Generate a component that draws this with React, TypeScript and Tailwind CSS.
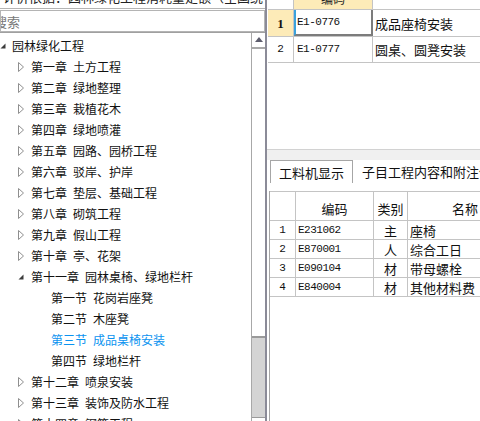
import React from 'react';

type TreeNode = {
  ch: string;
  title: string;
  level: 0 | 1 | 2;
  icon?: 'open' | 'closed';
  active?: boolean;
};

const tree: TreeNode[] = [
  { ch: '园林绿化工程', title: '', level: 0, icon: 'open' },
  { ch: '第一章', title: '土方工程', level: 1, icon: 'closed' },
  { ch: '第二章', title: '绿地整理', level: 1, icon: 'closed' },
  { ch: '第三章', title: '栽植花木', level: 1, icon: 'closed' },
  { ch: '第四章', title: '绿地喷灌', level: 1, icon: 'closed' },
  { ch: '第五章', title: '园路、园桥工程', level: 1, icon: 'closed' },
  { ch: '第六章', title: '驳岸、护岸', level: 1, icon: 'closed' },
  { ch: '第七章', title: '垫层、基础工程', level: 1, icon: 'closed' },
  { ch: '第八章', title: '砌筑工程', level: 1, icon: 'closed' },
  { ch: '第九章', title: '假山工程', level: 1, icon: 'closed' },
  { ch: '第十章', title: '亭、花架', level: 1, icon: 'closed' },
  { ch: '第十一章', title: '园林桌椅、绿地栏杆', level: 1, icon: 'open' },
  { ch: '第一节', title: '花岗岩座凳', level: 2 },
  { ch: '第二节', title: '木座凳', level: 2 },
  { ch: '第三节', title: '成品桌椅安装', level: 2, active: true },
  { ch: '第四节', title: '绿地栏杆', level: 2 },
  { ch: '第十二章', title: '喷泉安装', level: 1, icon: 'closed' },
  { ch: '第十三章', title: '装饰及防水工程', level: 1, icon: 'closed' },
  { ch: '第十四章', title: '钢筋工程', level: 1, icon: 'closed' },
];

const materials = [
  { no: '1', code: 'E231062', kind: '主', name: '座椅' },
  { no: '2', code: 'E870001', kind: '人', name: '综合工日' },
  { no: '3', code: 'E090104', kind: '材', name: '带母螺栓' },
  { no: '4', code: 'E840004', kind: '材', name: '其他材料费' },
];

function Arrow({ open }: { open?: boolean }) {
  if (open) {
    return (
      <svg width="6" height="6" viewBox="0 0 6 6">
        <polygon points="5.5,0.5 5.5,5.5 0.5,5.5" fill="#3c3c3c" />
      </svg>
    );
  }
  return (
    <svg width="6" height="10" viewBox="0 0 6 10">
      <polygon points="0.5,0.5 5.5,5 0.5,9.5" fill="#fff" stroke="#8f8f8f" strokeWidth="1" />
    </svg>
  );
}

function TreeRow({ node }: { node: TreeNode }) {
  const color = node.active ? 'text-[#0b93f0]' : 'text-[#111]';
  if (node.level === 0) {
    return (
      <div className="flex h-[21px] items-center">
        <span className="flex w-[12px] items-center pt-[1px]">
          <Arrow open />
        </span>
        <span className={color}>{node.ch}</span>
      </div>
    );
  }
  if (node.level === 1) {
    return (
      <div className="flex h-[21px] items-center pl-[18px]">
        <span className="flex w-[13px] items-center">
          <Arrow open={node.icon === 'open'} />
        </span>
        <span className={color}>{node.ch}</span>
        <span className={`ml-[6px] ${color}`}>{node.title}</span>
      </div>
    );
  }
  return (
    <div className="flex h-[21px] items-center pl-[51px]">
      <span className={color}>{node.ch}</span>
      <span className={`ml-[6px] ${color}`}>{node.title}</span>
    </div>
  );
}

export default function App() {
  return (
    <div className="flex h-[421px] w-[480px] overflow-hidden bg-white font-['Noto_Sans_CJK_SC',sans-serif] text-[12px] leading-none">
      {/* 左侧：定额目录 */}
      <div className="flex w-[265px] shrink-0 flex-col">
        <div className="h-[9px] overflow-hidden border-b border-[#b4b4b4]">
          <div className="mt-[-11px] whitespace-nowrap pl-[3px] text-[13px] leading-[16px] text-[#222]">
            计价依据：园林绿化工程消耗量定额（全国统一）
          </div>
        </div>
        <div className="mt-[1px] flex h-[22px] items-center overflow-hidden border border-[#b4b4b4] bg-white">
          <span className="ml-[-7px] text-[13px] text-[#777]">搜索</span>
        </div>
        <div className="flex min-h-0 flex-1 border-t border-[#a0a0a0]">
          <div className="flex-1 overflow-hidden whitespace-nowrap pt-[2px]">
            {tree.map((n) => (
              <TreeRow key={n.ch + n.title} node={n} />
            ))}
          </div>
          {/* 滚动条 */}
          <div className="flex w-[14px] flex-col border-l border-[#a8a8a8]">
            <div className="flex h-[16px] items-center justify-center border-b-2 border-[#a8a8a8] pb-[1px]">
              <svg width="8" height="5" viewBox="0 0 8 5">
                <polygon points="4,0 8,5 0,5" fill="#5e5e6e" />
              </svg>
            </div>
            <div className="h-[289px] border-b-2 border-[#9a9a9a] bg-white" />
            <div className="flex-1 bg-[#d4d4d4]" />
            <div className="h-[4px] border-t border-[#9a9a9a] bg-white" />
          </div>
        </div>
      </div>

      {/* 分隔条 */}
      <div className="w-[2px] shrink-0 bg-[#8b8b98]" />

      {/* 右侧 */}
      <div className="flex min-w-0 flex-1 flex-col">
        {/* 子目列表 */}
        <div className="h-[150px] overflow-hidden border-b border-[#d2d2d2] pl-[1px]">
          <div className="flex h-[10px] border-b border-[#c4c4c4]">
            <div className="w-[26px] shrink-0 border-r border-[#c4c4c4]" />
            <div className="flex w-[79px] shrink-0 justify-center overflow-hidden border-r border-[#c4c4c4] bg-[#fdebb8]">
              <span className="mt-[-7px] text-[#222]">编码</span>
            </div>
            <div className="flex-1" />
          </div>
          <div className="flex h-[27px] border-b border-[#c4c4c4]">
            <div className="flex w-[26px] shrink-0 items-center justify-center border-r border-[#c4c4c4] bg-[#fdebb8] font-['Liberation_Serif',serif] text-[13px] font-bold text-[#111]">
              1
            </div>
            <div className="flex w-[79px] shrink-0 items-center border-b-2 border-l-2 border-r-2 border-b-[#7c7c7c] border-l-[#3aa2dc] border-r-[#7c7c7c] pl-[1px] font-['Liberation_Mono',monospace] text-[11px] tracking-[-0.5px] text-[#111]">
              E1-0776
            </div>
            <div className="flex flex-1 items-center whitespace-nowrap pl-[2px] text-[13px] text-[#111]">
              成品座椅安装
            </div>
          </div>
          <div className="flex h-[26px] border-b border-[#c4c4c4]">
            <div className="flex w-[26px] shrink-0 items-center justify-center border-r border-[#c4c4c4] font-['Liberation_Mono',monospace] text-[11px] text-[#111]">
              2
            </div>
            <div className="flex w-[79px] shrink-0 items-center border-r border-[#c4c4c4] pl-[3px] font-['Liberation_Mono',monospace] text-[11px] tracking-[-0.5px] text-[#111]">
              E1-0777
            </div>
            <div className="flex flex-1 items-center whitespace-nowrap pl-[2px] text-[13px] text-[#111]">
              圆桌、圆凳安装
            </div>
          </div>
        </div>

        {/* 标签页 */}
        <div className="h-[10px] bg-[#f0f0f0]" />
        <div className="flex h-[23px] items-end whitespace-nowrap bg-white">
          <div className="ml-[3px] flex h-[23px] w-[83px] shrink-0 items-center justify-center border-l border-r border-t border-[#a6a6a6] text-[13px] text-[#111]">
            工料机显示
          </div>
          <div className="ml-[9px] flex h-[23px] items-center text-[13px] text-[#111]">子目工程内容和附注信息</div>
        </div>

        {/* 工料机表 */}
        <div className="ml-[2px] mt-[8px] flex-1 overflow-hidden border-l border-[#a6a6a6]">
          <div className="w-[252px]">
            <div className="flex h-[30px] border-b border-t border-[#c4c4c4] text-[13px] text-[#111]">
              <div className="w-[26px] shrink-0 border-r border-[#c4c4c4]" />
              <div className="flex w-[78px] shrink-0 items-center justify-center border-r border-[#c4c4c4] pt-[4px]">编码</div>
              <div className="flex w-[34px] shrink-0 items-center justify-center border-r border-[#c4c4c4] pt-[4px]">类别</div>
              <div className="flex flex-1 items-center justify-center pt-[4px]">名称</div>
            </div>
            {materials.map((m) => (
              <div key={m.no} className="flex h-[19px] border-b border-[#c4c4c4] text-[#111]">
                <div className="flex w-[26px] shrink-0 items-center justify-center border-r border-[#c4c4c4] font-['Liberation_Mono',monospace] text-[11px]">
                  {m.no}
                </div>
                <div className="flex w-[78px] shrink-0 items-center border-r border-[#c4c4c4] pl-[2px] font-['Liberation_Mono',monospace] text-[11px] tracking-[-0.5px]">
                  {m.code}
                </div>
                <div className="flex w-[34px] shrink-0 items-center justify-center border-r border-[#c4c4c4] text-[13px]">
                  {m.kind}
                </div>
                <div className="flex flex-1 items-center whitespace-nowrap pl-[2px] text-[13px]">{m.name}</div>
              </div>
            ))}
          </div>
        </div>
      </div>
    </div>
  );
}
